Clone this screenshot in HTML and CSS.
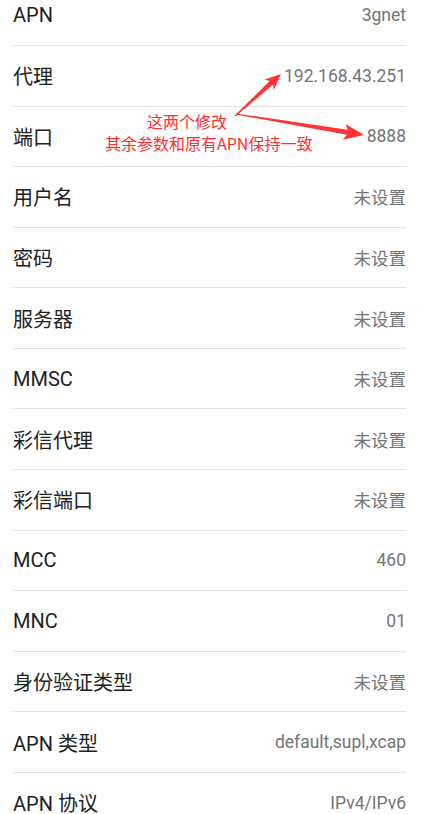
FILE: index.html
```html
<!DOCTYPE html>
<html lang="zh-CN">
<head>
    <meta charset="UTF-8">
    <meta name="viewport" content="width=device-width, initial-scale=1.0">
    <title>APN 设置</title>
    <link rel="stylesheet" href="styles.css">
</head>
<body>
    <div class="page">
        <ul class="settings">
            <li class="row"><span class="label">APN</span><span class="value">3gnet</span></li>
            <li class="row"><span class="label">代理</span><span class="value">192.168.43.251</span></li>
            <li class="row"><span class="label">端口</span><span class="value">8888</span></li>
            <li class="row"><span class="label">用户名</span><span class="value">未设置</span></li>
            <li class="row"><span class="label">密码</span><span class="value">未设置</span></li>
            <li class="row"><span class="label">服务器</span><span class="value">未设置</span></li>
            <li class="row"><span class="label">MMSC</span><span class="value">未设置</span></li>
            <li class="row"><span class="label">彩信代理</span><span class="value">未设置</span></li>
            <li class="row"><span class="label">彩信端口</span><span class="value">未设置</span></li>
            <li class="row"><span class="label">MCC</span><span class="value">460</span></li>
            <li class="row"><span class="label">MNC</span><span class="value">01</span></li>
            <li class="row"><span class="label">身份验证类型</span><span class="value">未设置</span></li>
            <li class="row"><span class="label">APN 类型</span><span class="value">default,supl,xcap</span></li>
            <li class="row"><span class="label">APN 协议</span><span class="value">IPv4/IPv6</span></li>
        </ul>

        <!-- red annotation drawn over the screenshot -->
        <svg class="arrows" width="424" height="200" viewBox="0 0 424 200">
            <polygon points="234.7,115.6 269.7,81.0 264.5,79.6 281,74 273.9,90.0 273.1,84.6 235.3,116.4" />
            <polygon points="236.1,113.5 347.7,129.8 345.6,123.9 364,135 343.0,139.7 346.9,134.8 235.9,114.5" />
        </svg>
        <div class="note">
            <div class="note-first">这两个修改</div>
            <div>其余参数和原有APN保持一致</div>
        </div>
    </div>
</body>
</html>
```

FILE: styles.css
```css
* {
    font-family: Roboto, "Noto Sans CJK SC", sans-serif;
}

body {
    margin: 0;
    background-color: #ffffff;
    overflow: hidden;
}

.page {
    position: relative;
    width: 424px;
    height: 814px;
    overflow: hidden;
}

.settings {
    list-style: none;
    margin: -14.6px 0 0 0;
    padding: 0 18px 0 13px;
}

.row {
    height: 59.58px;
    border-bottom: 1px solid #e3e3e3;
    display: flex;
    justify-content: space-between;
    align-items: center;
}

.label {
    font-size: 20px;
    color: #212121;
}

.value {
    font-size: 17.5px;
    color: #757575;
}

.arrows {
    position: absolute;
    top: 0;
    left: 0;
}

.arrows polygon {
    fill: #ff3535;
}

.note {
    position: absolute;
    left: 105px;
    top: 110px;
    font-size: 16px;
    line-height: 22px;
    color: #ff3030;
    white-space: nowrap;
}

.note div {
    font-family: "Noto Sans CJK SC", sans-serif;
}

.note-first {
    margin-left: 42px;
}
```
